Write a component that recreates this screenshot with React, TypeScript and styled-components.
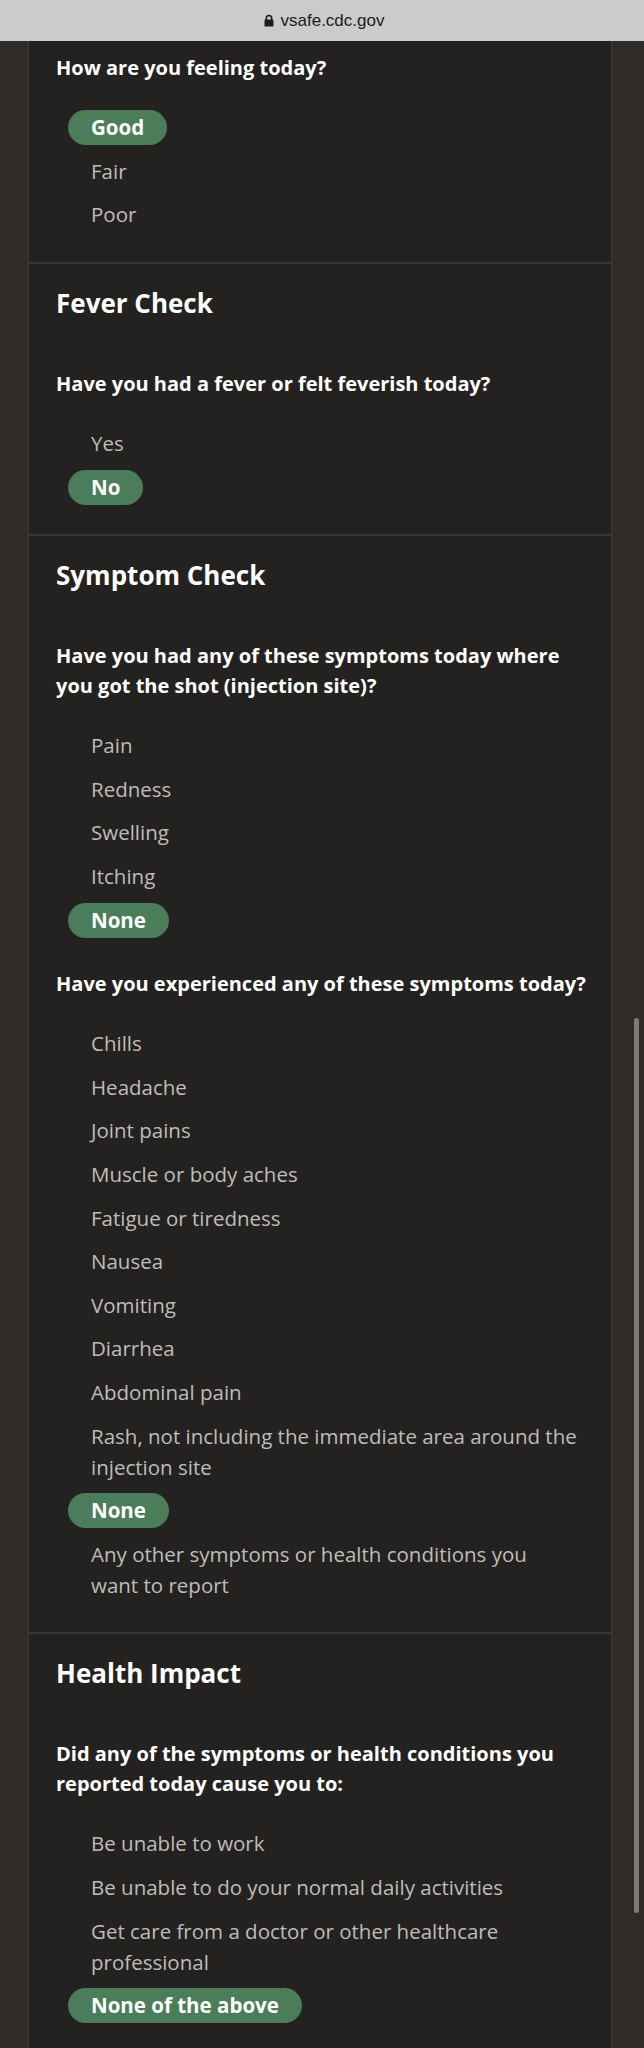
import React from "react";
import styled, { createGlobalStyle } from "styled-components";

const GlobalStyle = createGlobalStyle`
  html, body {
    margin: 0;
    padding: 0;
    background: #2e2b28;
  }
  * {
    box-sizing: border-box;
  }
`;

const Page = styled.div`
  position: relative;
  min-height: 2048px;
  background: #2e2b28;
  font-family: "Open Sans", Lato, sans-serif;
  overflow: hidden;
`;

const AddressBar = styled.header`
  height: 41px;
  background: #cbcbcb;
  display: flex;
  align-items: center;
  justify-content: center;
  gap: 7px;
  font-family: "Liberation Sans", Arial, sans-serif;
  font-size: 17px;
  color: #1c1c1c;
  padding-left: 4px;
`;

const Main = styled.main`
  padding: 0 31px 0 27px;
`;

const Card = styled.div`
  background: #242220;
  border-left: 2px solid #363331;
  border-right: 2px solid #363331;
  min-height: 2007px;
`;

const Section = styled.section<{ $first?: boolean }>`
  padding: ${(p) => (p.$first ? "12px" : "22px")} 20px 25px 27px;

  & + & {
    border-top: 2px solid #383533;
  }
`;

const Heading = styled.h2`
  margin: 0 0 49px;
  font-size: 26px;
  line-height: 34px;
  font-weight: 700;
  color: #ffffff;
`;

const Question = styled.h3`
  margin: 0 0 23px;
  font-size: 20px;
  line-height: 30px;
  font-weight: 700;
  color: #ffffff;
`;

const OptionList = styled.ul`
  list-style: none;
  margin: 0;
  padding: 0 0 0 35px;

  & + ${Question} {
    margin-top: 27px;
  }
`;

const Option = styled.li<{ $selected?: boolean }>`
  font-size: 20.5px;
  line-height: 31px;
  padding: ${(p) => (p.$selected ? "4.3px 0" : "6.3px 0")};
  white-space: pre-line;
  color: #bfbdba;
`;

const Pill = styled.span`
  display: inline-block;
  margin-left: -23px;
  padding: 0 23px;
  line-height: 35px;
  border-radius: 18px;
  background: #4b7d5a;
  color: #ffffff;
  font-weight: 700;
`;

const ScrollThumb = styled.div`
  position: absolute;
  left: 634px;
  top: 1018px;
  width: 5px;
  height: 895px;
  border-radius: 3px;
  background: #7d7b79;
`;

const LockIcon = () => (
  <svg width="10" height="13" viewBox="0 0 10 13" aria-hidden>
    <path d="M2.3 6V4.2a2.7 2.7 0 0 1 5.4 0V6" fill="none" stroke="#1c1c1c" strokeWidth="1.6" />
    <rect x="0.5" y="5.6" width="9" height="7" rx="1.2" fill="#1c1c1c" />
  </svg>
);

type Block = {
  question: string;
  options: string[];
  selected: string;
};

type SectionData = {
  title?: string;
  blocks: Block[];
};

const sections: SectionData[] = [
  {
    blocks: [
      {
        question: "How are you feeling today?",
        options: ["Good", "Fair", "Poor"],
        selected: "Good",
      },
    ],
  },
  {
    title: "Fever Check",
    blocks: [
      {
        question: "Have you had a fever or felt feverish today?",
        options: ["Yes", "No"],
        selected: "No",
      },
    ],
  },
  {
    title: "Symptom Check",
    blocks: [
      {
        question:
          "Have you had any of these symptoms today where you got the shot (injection site)?",
        options: ["Pain", "Redness", "Swelling", "Itching", "None"],
        selected: "None",
      },
      {
        question: "Have you experienced any of these symptoms today?",
        options: [
          "Chills",
          "Headache",
          "Joint pains",
          "Muscle or body aches",
          "Fatigue or tiredness",
          "Nausea",
          "Vomiting",
          "Diarrhea",
          "Abdominal pain",
          "Rash, not including the immediate area around the\ninjection site",
          "None",
          "Any other symptoms or health conditions you\nwant to report",
        ],
        selected: "None",
      },
    ],
  },
  {
    title: "Health Impact",
    blocks: [
      {
        question:
          "Did any of the symptoms or health conditions you reported today cause you to:",
        options: [
          "Be unable to work",
          "Be unable to do your normal daily activities",
          "Get care from a doctor or other healthcare\nprofessional",
          "None of the above",
        ],
        selected: "None of the above",
      },
    ],
  },
];

export default function App() {
  return (
    <Page>
      <GlobalStyle />
      <AddressBar>
        <LockIcon />
        vsafe.cdc.gov
      </AddressBar>
      <Main>
        <Card>
          {sections.map((section, i) => (
            <Section key={i} $first={i === 0}>
              {section.title && <Heading>{section.title}</Heading>}
              {section.blocks.map((block) => (
                <React.Fragment key={block.question}>
                  <Question>{block.question}</Question>
                  <OptionList>
                    {block.options.map((option) => {
                      const selected = option === block.selected;
                      return (
                        <Option key={option} $selected={selected}>
                          {selected ? <Pill>{option}</Pill> : option}
                        </Option>
                      );
                    })}
                  </OptionList>
                </React.Fragment>
              ))}
            </Section>
          ))}
        </Card>
      </Main>
      <ScrollThumb />
    </Page>
  );
}
